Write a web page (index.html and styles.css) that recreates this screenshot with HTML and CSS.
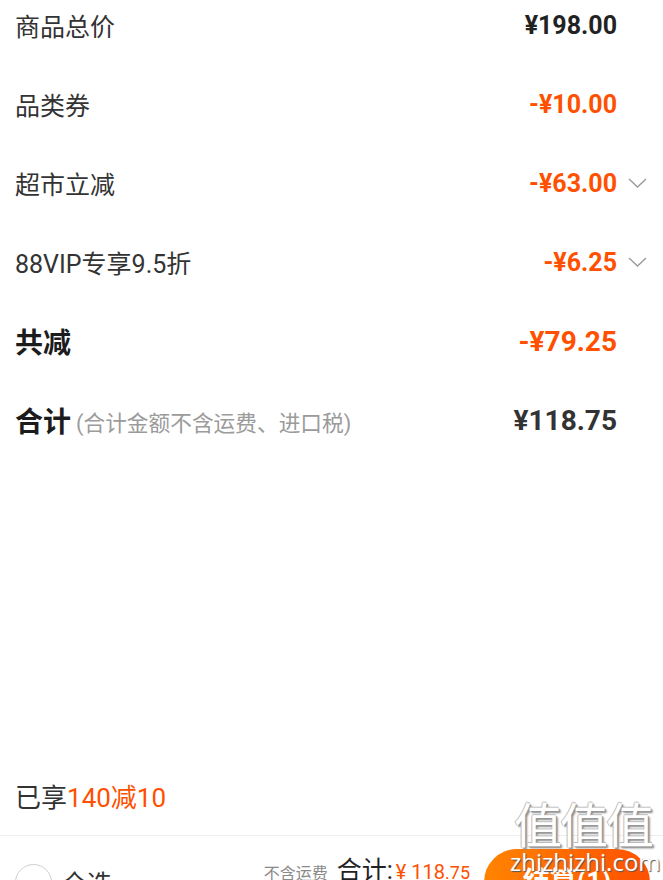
FILE: index.html
```html
<!DOCTYPE html>
<html>
<head>
	<meta charset="UTF-8">
	<meta name="viewport" content="width=device-width,initial-scale=1" />
	<title>结算明细</title>
	<link rel="stylesheet" href="styles.css">
</head>
<body>
	<div id="page">
		<ul class="summary">
			<li class="row">
				<span class="label">商品总价</span>
				<span class="value">¥198.00</span>
				<span class="more"></span>
			</li>
			<li class="row">
				<span class="label">品类券</span>
				<span class="value minus">-¥10.00</span>
				<span class="more"></span>
			</li>
			<li class="row">
				<span class="label">超市立减</span>
				<span class="value minus">-¥63.00</span>
				<span class="more">
					<svg width="19" height="10" viewBox="0 0 19 10"><polyline points="1,1 9.5,9 18,1" fill="none" stroke="#9a9a9a" stroke-width="1.4"/></svg>
				</span>
			</li>
			<li class="row">
				<span class="label">88VIP专享9.5折</span>
				<span class="value minus">-¥6.25</span>
				<span class="more">
					<svg width="19" height="10" viewBox="0 0 19 10"><polyline points="1,1 9.5,9 18,1" fill="none" stroke="#9a9a9a" stroke-width="1.4"/></svg>
				</span>
			</li>
			<li class="row strong">
				<span class="label">共减</span>
				<span class="value minus">-¥79.25</span>
				<span class="more"></span>
			</li>
			<li class="row strong">
				<span class="label">合计<em class="note">(合计金额不含运费、进口税)</em></span>
				<span class="value grey">¥118.75</span>
				<span class="more"></span>
			</li>
		</ul>

		<div class="promo">已享<span class="hl">140减10</span></div>

		<div class="footer">
			<div class="check">
				<i class="circle"></i>
				<span>全选</span>
			</div>
			<div class="total">
				<span class="tip">不含运费</span>
				<span class="sum">合计:</span>
				<span class="price">¥ 118<small>.75</small></span>
			</div>
			<div class="btn">结算(1)</div>
		</div>

		<!-- 水印 -->
		<div class="mark">
			<span class="mark-cn">值值值</span>
			<span class="mark-en">zhizhizhi.com</span>
		</div>
	</div>
</body>
</html>
```
FILE: styles.css
```css
* {
	padding: 0;
	margin: 0;
}

li {
	list-style: none;
}

body {
	background: #fff;
	font-family: Roboto, "Noto Sans CJK SC", sans-serif;
	color: #333;
}

#page {
	position: relative;
	width: 663px;
	overflow: hidden;
}

.summary {
	display: flex;
	flex-direction: column;
	gap: 29px;
}

.row {
	height: 50px;
	display: flex;
	align-items: center;
	padding: 0 16px 0 15px;
	font-size: 25px;
}

.row .label {
	flex: 1;
	display: flex;
	align-items: center;
	color: #333;
}

.row .value {
	font-weight: bold;
	color: #222;
}

.row .minus {
	color: #ff5000;
}

.row .grey {
	color: #333;
}

.row .more {
	width: 19px;
	margin-left: 11px;
	display: flex;
	align-items: center;
}

.row.strong {
	font-size: 28px;
}

.row.strong .label {
	font-weight: bold;
	color: #1c1c1c;
}

.row .note {
	font-style: normal;
	font-weight: normal;
	font-size: 21.7px;
	color: #9b9b9b;
	margin-left: 5px;
	margin-top: 2px;
}

.promo {
	margin-top: 338px;
	padding-left: 15px;
	font-size: 26px;
	line-height: 30px;
	color: #333;
}

.promo .hl {
	color: #ff5000;
}

.footer {
	margin-top: 22px;
	border-top: 1px solid #ededed;
	height: 92px;
	display: flex;
	align-items: center;
	padding: 0 13px 0 15px;
}

.check {
	flex: 1;
	display: flex;
	align-items: center;
	font-size: 25px;
	color: #333;
}

.circle {
	width: 35px;
	height: 35px;
	border: 1.5px solid #cfcfcf;
	border-radius: 50%;
	margin-right: 10px;
}

.total {
	align-self: flex-start;
	margin-top: 14px;
	display: flex;
	align-items: baseline;
	white-space: nowrap;
}

.total .tip {
	font-size: 16px;
	color: #8a8a8a;
	margin-right: 9px;
}

.total .sum {
	font-size: 25px;
	color: #222;
}

.total .price {
	font-size: 20px;
	color: #ff5000;
	margin-left: 3px;
}

.total .price small {
	font-size: 18px;
}

.btn {
	width: 166px;
	height: 66px;
	margin-left: 14px;
	border-radius: 33px;
	background: linear-gradient(to right, #ff8400, #ff5000);
	color: #fff;
	font-size: 27px;
	font-weight: bold;
	text-align: center;
	line-height: 66px;
}

.mark {
	position: absolute;
	left: 510px;
	top: 795px;
	display: flex;
	flex-direction: column;
	align-items: flex-start;
	color: #fff;
	pointer-events: none;
}

.mark-cn {
	font-family: "Noto Sans CJK SC", sans-serif;
	font-size: 48px;
	line-height: 54px;
	letter-spacing: -2px;
	padding-left: 4px;
	text-shadow: 1px 1px 0 #999, -1px 0 0 #bbb, 0 -1px 0 #bbb, 2px 2px 2px #888;
}

.mark-en {
	font-family: "Open Sans", sans-serif;
	font-size: 24px;
	line-height: 26px;
	text-shadow: 1px 1px 1px #555;
}
```
